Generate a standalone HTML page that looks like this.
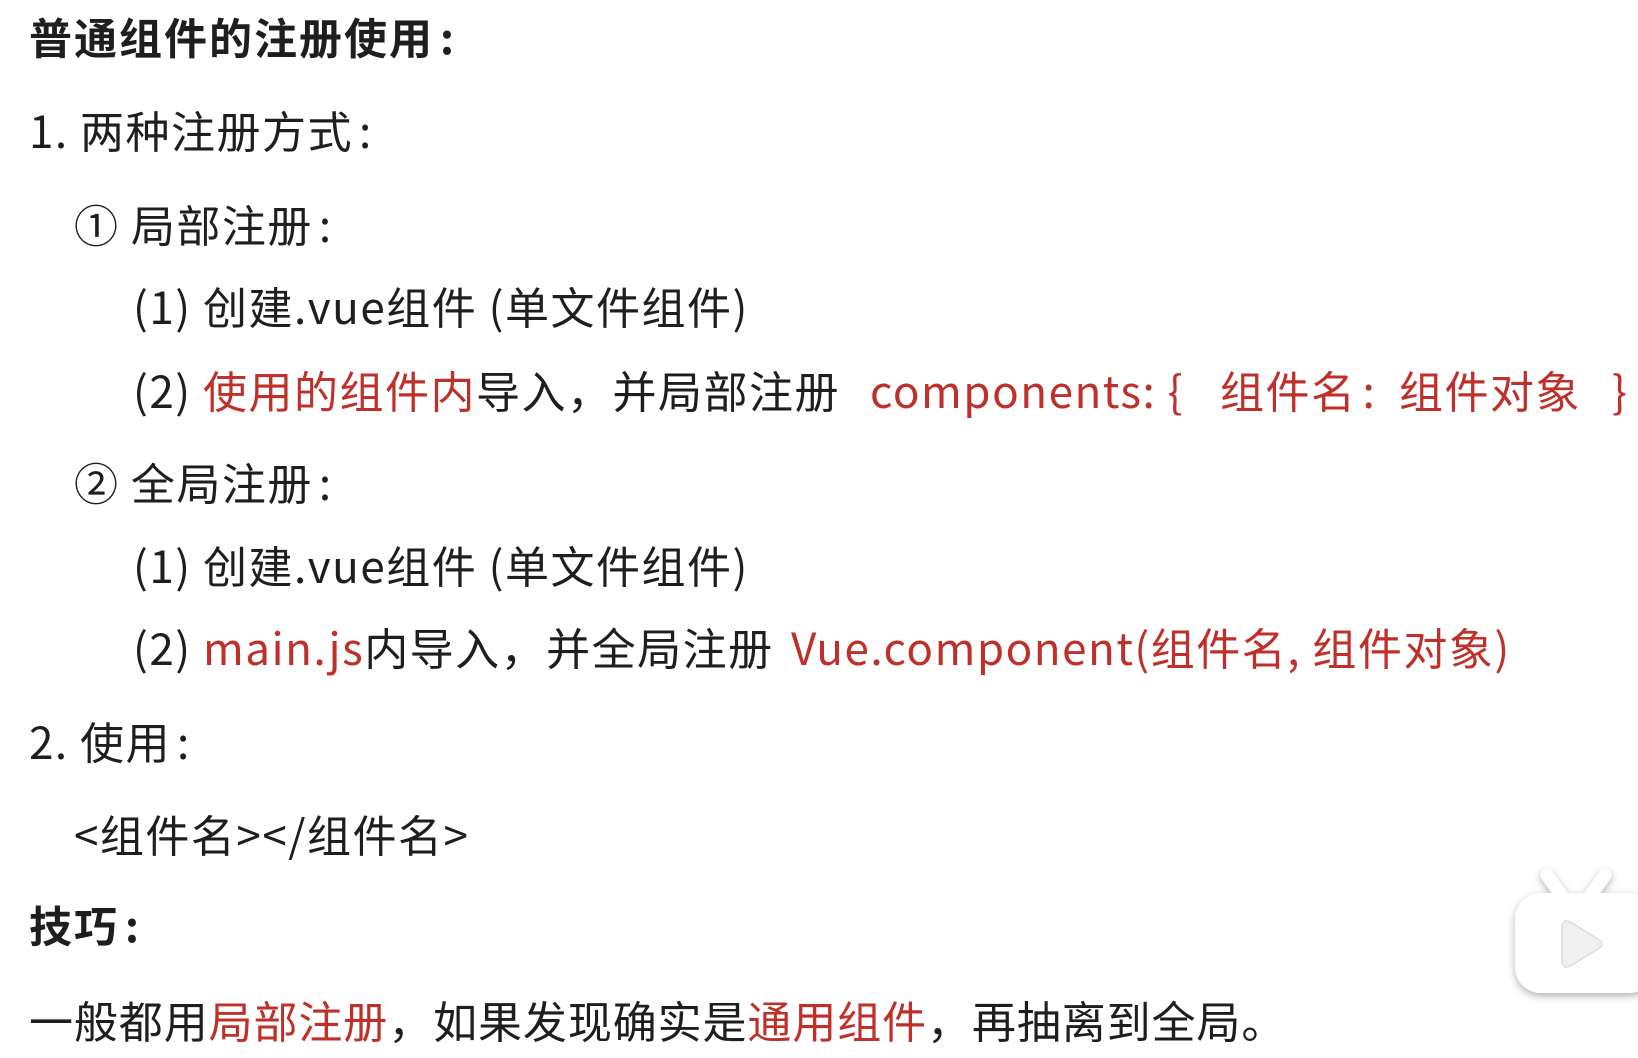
<!DOCTYPE html>
<html><head><meta charset="utf-8"><style>
html,body{margin:0;padding:0;background:#fff;width:1638px;height:1058px;overflow:hidden;position:relative}
.l{position:absolute;white-space:nowrap;font-family:"Noto Sans CJK SC","Liberation Sans",sans-serif;font-size:44px;letter-spacing:1.5px;color:#1e1e1e;line-height:1;transform:translateY(-50%)}
.b{font-weight:bold;font-size:43px;letter-spacing:2px}
.r{color:#c0302a}
.c{margin-left:6px}
</style></head><body>
<div class="l b" style="left:29px;top:37px">普通组件的注册使用<span class="c">:</span></div>
<div class="l" style="left:29px;top:129px">1. 两种注册方式<span class="c">:</span></div>
<div class="l" style="left:74px;top:223px">① 局部注册<span class="c">:</span></div>
<div class="l" style="left:133px;top:305px">(1) 创建.vue组件 (单文件组件)</div>
<div class="l" style="left:133px;top:389px">(2) <span class="r">使用的组件内</span>导入，并局部注册</div>
<div class="l r" style="left:870px;top:389px">components: {</div>
<div class="l r" style="left:1220px;top:389px">组件名<span class="c">:</span>&nbsp;&nbsp;组件对象</div>
<div class="l r" style="left:1612px;top:389px">}</div>
<div class="l" style="left:74px;top:481px">② 全局注册<span class="c">:</span></div>
<div class="l" style="left:133px;top:564px">(1) 创建.vue组件 (单文件组件)</div>
<div class="l" style="left:133px;top:646px">(2) <span class="r">main.js</span>内导入，并全局注册</div>
<div class="l r" style="left:791px;top:646px">Vue.component(组件名, 组件对象)</div>
<div class="l" style="left:29px;top:740px">2. 使用<span class="c">:</span></div>
<div class="l" style="left:74px;top:833px">&lt;组件名&gt;&lt;/组件名&gt;</div>
<div class="l b" style="left:29px;top:925px">技巧<span class="c">:</span></div>
<div class="l" style="left:29px;top:1019px;letter-spacing:0.9px">一般都用<span class="r">局部注册</span>，如果发现确实是<span class="r">通用组件</span>，再抽离到全局。</div>
<svg style="position:absolute;left:1505px;top:855px" width="133" height="150" viewBox="0 0 133 150">
<defs><filter id="s" x="-30%" y="-30%" width="160%" height="160%"><feDropShadow dx="0" dy="3" stdDeviation="4" flood-color="#000" flood-opacity="0.3"/></filter></defs>
<g filter="url(#s)" fill="#fff">
<path d="M42 20 L56 40" stroke="#fff" stroke-width="13" stroke-linecap="round"/>
<path d="M100 20 L86 40" stroke="#fff" stroke-width="13" stroke-linecap="round"/>
<rect x="10" y="38" width="140" height="100" rx="26"/>
</g>
<path d="M57 74 Q57 62 67 68 L93 84 Q101 89 93 94 L67 110 Q57 116 57 104 Z" fill="#f0f0f0" stroke="#dcdcdc" stroke-width="1.5"/>
</svg>
</body></html>
